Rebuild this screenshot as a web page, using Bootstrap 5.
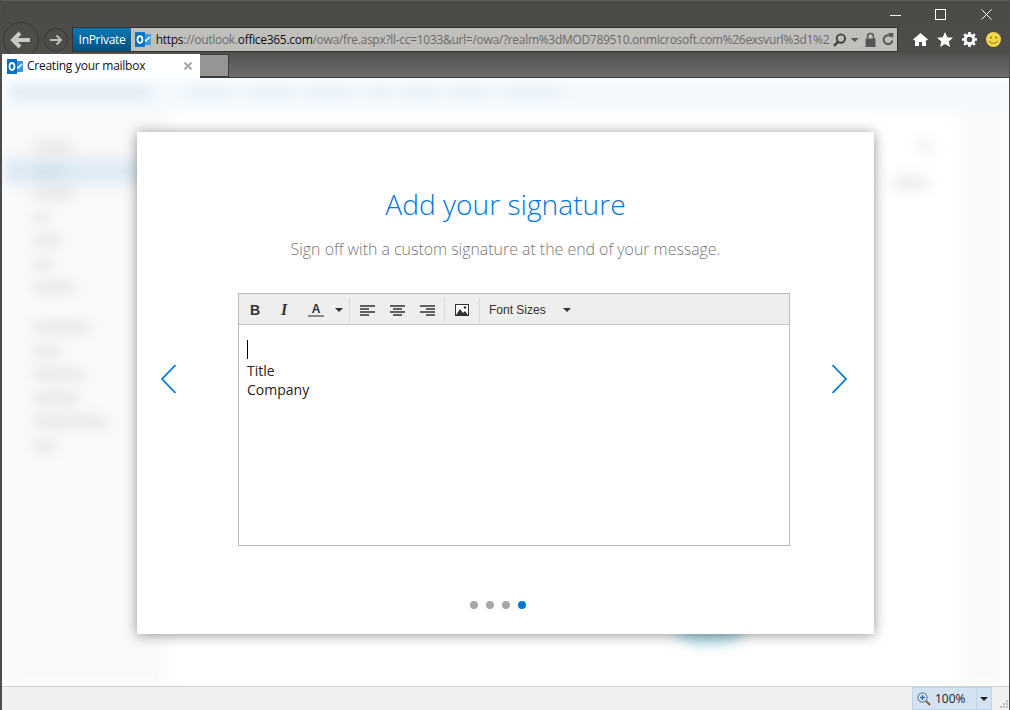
<!DOCTYPE html>
<html lang="en">
<head>
<meta charset="utf-8">
<title>Creating your mailbox</title>
<link rel="stylesheet" href="https://cdn.jsdelivr.net/npm/bootstrap@5.3.0/dist/css/bootstrap.min.css">
<style>
html,body{height:710px;overflow:hidden;margin:0;font-family:"Open Sans","Noto Sans",sans-serif}
.win{width:1010px;height:710px;background:#4a4946;border:solid #4d4c4a;border-width:0 1px 0 2px}
.chrome{height:78px;background:linear-gradient(#4b4a47 0,#4e4d4a 50px,#5a5957 58px,#6f6e6c 77px);border-top:1px solid #5c5b59;border-bottom:1px solid #3a3a38}
.caption{height:24px;padding-top:8px}
.capbtn{width:11px;height:11px;display:block}
.navrow{height:25px;margin-top:2px}
.backbtn{width:36px;height:36px;border:1px solid #383735;border-radius:50%;margin:1px 0 0 1px;flex:none}
.fwdbtn{width:24px;height:24px;border:1px solid #383735;border-radius:50%;margin-left:5px;flex:none}
.addr{width:826px;height:25px;margin-left:4px;background:#c1bfbc;border:1px solid #333230;flex:none}
.priv{width:58px;height:23px;background:linear-gradient(#0a78b5,#05507f);color:#fff;font-size:12px;letter-spacing:-.3px;flex:none}
.urlt{width:672px;margin-left:5px;font-size:12px;color:#6b6a68;white-space:nowrap;flex:none;letter-spacing:-.3px}
.urlt b{font-weight:400;color:#111}
.tools{margin-left:15px;gap:9px}
.tabs{height:24px;margin-top:2px}
.tabcur{width:198px;height:24px;background:#fff;font-size:12px;letter-spacing:-.25px;color:#111;flex:none;padding-left:5px}
.tabnew{width:29px;height:23px;background:#959593;border:1px solid #3a3a38;border-left:0;flex:none}
.stage{height:608px;background:#fff}
.ghost{inset:0;filter:blur(7px)}
.gtop{height:33px;background:#f3f9fd;padding-top:10px;gap:12px}
.gbar{height:8px;background:#e3ecf3;flex:none}
.gside{width:165px;background:#f9f9f9;padding-top:33px}
.gitem{height:7px;margin:0 0 16.5px 32px;background:#d9d9d9}
.gsel{background:#c6d4df}
.gband{height:26px;margin:-10px 0 6.5px;padding:10px 0 0;background:#deeaf4}
.gband .gitem{margin-bottom:0;width:30px}
.gright{width:50px;background:#f9f9f9}
.blob{position:absolute;border-radius:50%}
.stack{padding-top:54px}
.dlg{width:737px;height:502px;background:#fff;box-shadow:0 1px 12px rgba(0,0,0,.42);margin-left:135px}
.dtitle{font-size:28.2px;font-weight:300;color:#0078d7;line-height:38px;margin:53px 0 0}
.dsub{font-size:15.9px;font-weight:300;color:#767676;line-height:22px;margin:15px 0 0}
.body3{margin-top:33px}
.arrow{width:15px;height:30px;flex:none;margin-top:71px}
.ed{width:552px;height:253px;border:1px solid #b9b9b9;margin:0 42px 0 62px;flex:none}
.edbar{height:31px;background:#eee;border-bottom:1px solid #c4c4c4;font-family:"Liberation Sans",sans-serif;color:#333;padding-top:2px}
.tb{display:flex;align-items:center;justify-content:center;height:100%;flex:none}
.sep{width:1px;height:24px;background:#d8d8d8;flex:none}
.edtxt{padding:15px 8px 0;font-size:14px;line-height:19px;color:#222}
.caret1{width:1px;height:19px;background:#000;margin-bottom:2px}
.dots{gap:8px;margin:55px 16px 0 0}
.dotx{width:8px;height:8px;border-radius:50%;background:#a6a6a6}
.doton{background:#0078d7}
.status{height:24px;background:#f0f0f0;border-top:1px solid #d2d2d2;font-size:12px;color:#222}
.zoombox{width:64px;height:23px;margin-left:910px;background:#d3e3f1;border:solid #bcd5ea;border-width:1px 0 1px 1px;flex:none}
.zoomdd{width:16px;height:23px;background:#d3e3f1;border:1px solid #bcd5ea;flex:none}
.grip{margin:auto 0 1px 7px;flex:none}
</style>
</head>
<body>
<div class="win d-flex flex-column">
  <header class="chrome">
    <div class="caption d-flex justify-content-end">
      <svg class="capbtn" style="margin-right:34px" viewBox="0 0 11 11"><path d="M0 6.500h11" stroke="#fff"/></svg>
      <svg class="capbtn" style="margin-right:35px" viewBox="0 0 11 11"><rect x=".5" y=".5" width="10" height="10" fill="none" stroke="#fff"/></svg>
      <svg class="capbtn" style="margin-right:17px" viewBox="0 0 11 11"><path d="M.5.5l10 10M10.500.5l-10 10" stroke="#fff" fill="none"/></svg>
    </div>
    <div class="navrow d-flex align-items-center">
      <div class="backbtn d-flex align-items-center justify-content-center">
        <svg width="22" height="18" viewBox="0 0 22 18"><path d="M20 9H4M10 2L3 9l7 7" fill="none" stroke="#c8c8c6" stroke-width="4"/></svg>
      </div>
      <div class="fwdbtn d-flex align-items-center justify-content-center">
        <svg width="14" height="12" viewBox="0 0 14 12"><path d="M1 6h11M7.500 1.500L12 6l-4.500 4.500" fill="none" stroke="#bdbdbb" stroke-width="2"/></svg>
      </div>
      <div class="addr d-flex align-items-center">
        <div class="priv d-flex align-items-center justify-content-center">InPrivate</div>
        <svg class="ms-1 flex-none" width="16" height="15" viewBox="0 0 16 15"><rect x="6" y="2" width="10" height="11" fill="#3a96dd"/><path d="M8 6l3 3 4-4" fill="none" stroke="#fff" stroke-width="1.500"/><rect y="0" width="10" height="15" fill="#0072c6"/><ellipse cx="5" cy="7.500" rx="2.500" ry="3.500" fill="none" stroke="#fff" stroke-width="1.800"/></svg>
        <div class="urlt"><b>https</b>://outlook.<b>office365.com</b>/owa/fre.aspx?ll-cc=1033&amp;url=/owa/?realm%3dMOD789510.onmicrosoft.com%26exsvurl%3d1%2</div>
        <svg class="ms-1" width="66" height="16" viewBox="0 0 66 16">
          <circle cx="9" cy="6.500" r="4.200" fill="none" stroke="#444" stroke-width="2"/><path d="M6 10l-4 4" stroke="#444" stroke-width="2.500"/>
          <path d="M19 6h8l-4 4z" fill="#555"/>
          <rect x="34" y="6.500" width="10" height="8.500" fill="#555"/><path d="M36 7V4.500a3 3 0 0 1 6 0V7" fill="none" stroke="#555" stroke-width="1.500"/>
          <path d="M60 4.500a4.500 4.500 0 1 0 1.200 4" fill="none" stroke="#555" stroke-width="2"/><path d="M56.500 1l5.500 0v5z" fill="#555"/>
        </svg>
      </div>
      <div class="tools d-flex align-items-center">
        <svg width="15" height="15" viewBox="0 0 15 15"><path d="M7.500 1L0 7.500l1 1 1-.8V14h4v-4h3v4h4V7.700l1 .8 1-1z" fill="#fff"/></svg>
        <svg width="16" height="15" viewBox="0 0 16 15"><path d="M8 0l2.300 5.200 5.700.5-4.300 3.700L13 15 8 12l-5 3 1.300-5.600L0 5.700l5.700-.5z" fill="#fff"/></svg>
        <svg width="15" height="15" viewBox="0 0 15 15"><circle cx="7.500" cy="7.500" r="4.300" fill="none" stroke="#fff" stroke-width="3"/><path d="M7.500 0v15M0 7.500h15M2.200 2.200l10.600 10.600M12.800 2.200L2.200 12.800" stroke="#fff" stroke-width="2.600" stroke-dasharray="3 9"/></svg>
        <svg width="15" height="15" viewBox="0 0 15 15"><circle cx="7.500" cy="7.500" r="7.500" fill="#f2d74b"/><circle cx="5" cy="5.500" r="1" fill="#8a7416"/><circle cx="10" cy="5.500" r="1" fill="#8a7416"/><path d="M3.500 9c1 3 7 3 8 0" fill="none" stroke="#8a7416"/></svg>
      </div>
    </div>
    <div class="tabs d-flex">
      <div class="tabcur d-flex align-items-center">
        <svg width="16" height="15" viewBox="0 0 16 15"><rect x="6" y="2" width="10" height="11" fill="#3a96dd"/><path d="M8 6l3 3 4-4" fill="none" stroke="#fff" stroke-width="1.500"/><rect y="0" width="10" height="15" fill="#0072c6"/><ellipse cx="5" cy="7.500" rx="2.500" ry="3.500" fill="none" stroke="#fff" stroke-width="1.800"/></svg>
        <span class="ms-1">Creating your mailbox</span>
        <svg class="ms-auto me-2" width="8" height="8" viewBox="0 0 8 8"><path d="M.5.5l7 7M7.500.5l-7 7" stroke="#a8a8a8" stroke-width="2"/></svg>
      </div>
      <div class="tabnew"></div>
    </div>
  </header>

  <main class="stage position-relative overflow-hidden">
    <div class="ghost position-absolute d-flex flex-column">
      <div class="gtop d-flex">
        <span class="gbar" style="width:140px;margin:0 26px 0 8px;background:#d6e3ee"></span>
        <span class="gbar" style="width:45px"></span>
        <span class="gbar" style="width:48px"></span>
        <span class="gbar" style="width:48px"></span>
        <span class="gbar" style="width:26px"></span>
        <span class="gbar" style="width:36px"></span>
        <span class="gbar" style="width:38px"></span>
        <span class="gbar" style="width:60px"></span>
      </div>
      <div class="d-flex flex-grow-1">
        <div class="gside">
          <div class="gitem" style="width:38px"></div>
          <div class="gband"><div class="gitem gsel"></div></div>
          <div class="gitem" style="width:40px"></div>
          <div class="gitem" style="width:14px"></div>
          <div class="gitem" style="width:26px"></div>
          <div class="gitem" style="width:18px"></div>
          <div class="gitem" style="width:40px;margin-bottom:33px"></div>
          <div class="gitem" style="width:55px"></div>
          <div class="gitem" style="width:26px"></div>
          <div class="gitem" style="width:50px"></div>
          <div class="gitem" style="width:44px"></div>
          <div class="gitem" style="width:72px"></div>
          <div class="gitem" style="width:22px"></div>
        </div>
        <div class="flex-grow-1"></div>
        <div class="gright"></div>
      </div>
      <div class="blob" style="left:673px;top:538px;width:70px;height:28px;background:#a9d8e4"></div>
      <div class="blob" style="left:888px;top:98px;width:40px;height:14px;background:#e6e9eb"></div>
      <div class="blob" style="left:916px;top:60px;width:16px;height:16px;background:#f0f0f0"></div>
    </div>

    <div class="stack position-relative">
      <section class="dlg d-flex flex-column text-center">
        <h1 class="dtitle">Add your signature</h1>
        <p class="dsub">Sign off with a custom signature at the end of your message.</p>
        <div class="body3 d-flex align-items-start ps-4">
          <svg class="arrow" viewBox="0 0 15 30"><path d="M14.500 1L1 15l13.500 14" fill="none" stroke="#0078d7" stroke-width="1.800"/></svg>
          <div class="ed d-flex flex-column text-start">
            <div class="edbar d-flex align-items-center">
              <div class="tb" style="width:32px;font-weight:700;font-size:14px">B</div>
              <div class="tb" style="width:26px;font-family:'Liberation Serif',serif;font-style:italic;font-weight:700;font-size:16px">I</div>
              <div class="tb flex-column" style="width:38px;font-size:12px;font-weight:700;line-height:12px">A<svg class="d-block" width="16" height="2"><rect width="16" height="2" fill="#888"/></svg></div>
              <svg width="8" height="4" viewBox="0 0 8 4"><path d="M0 0h8L4 4z" fill="#333"/></svg>
              <div class="sep" style="margin-left:6px"></div>
              <svg style="margin-left:10px" width="15" height="11" viewBox="0 0 15 11"><path d="M0 1h15M0 4h9M0 7h15M0 10h9" stroke="#333" stroke-width="1.500"/></svg>
              <svg style="margin-left:15px" width="15" height="11" viewBox="0 0 15 11"><path d="M0 1h15M3 4h9M0 7h15M3 10h9" stroke="#333" stroke-width="1.500"/></svg>
              <svg style="margin-left:15px" width="15" height="11" viewBox="0 0 15 11"><path d="M0 1h15M6 4h9M0 7h15M6 10h9" stroke="#333" stroke-width="1.500"/></svg>
              <div class="sep" style="margin-left:9px"></div>
              <svg style="margin-left:10px" width="14" height="12" viewBox="0 0 14 12"><rect x=".5" y=".5" width="13" height="11" fill="#fff" stroke="#333"/><path d="M1 11l4-6 3 4 2-2 3 4z" fill="#333"/><circle cx="10" cy="3.500" r="1.300" fill="#333"/></svg>
              <div class="sep" style="margin-left:10px"></div>
              <span style="font-size:12px;margin-left:9px;width:74px">Font Sizes</span>
              <svg width="8" height="4" viewBox="0 0 8 4"><path d="M0 0h8L4 4z" fill="#333"/></svg>
            </div>
            <div class="edtxt">
              <div class="caret1"></div>
              <div>Title</div>
              <div>Company</div>
            </div>
          </div>
          <svg class="arrow" viewBox="0 0 15 30"><path d="M.5 1L14 15 .5 29" fill="none" stroke="#0078d7" stroke-width="1.800"/></svg>
        </div>
        <div class="dots d-flex justify-content-center">
          <span class="dotx"></span><span class="dotx"></span><span class="dotx"></span><span class="dotx doton"></span>
        </div>
      </section>
    </div>
  </main>

  <footer class="status d-flex">
    <div class="zoombox d-flex align-items-center">
      <svg class="ms-1" width="14" height="14" viewBox="0 0 14 14"><circle cx="5.500" cy="5.500" r="4.500" fill="#e8f1f8" stroke="#7d93a6" stroke-width="1.500"/><path d="M3 5.500h5M5.500 3v5" stroke="#1b6fb5" stroke-width="1.500"/><path d="M9 9l4 4" stroke="#8a5a2a" stroke-width="2"/></svg>
      <span class="ms-1">100%</span>
    </div>
    <div class="zoomdd d-flex align-items-center justify-content-center">
      <svg width="8" height="4" viewBox="0 0 8 4"><path d="M0 0h8L4 4z" fill="#222"/></svg>
    </div>
    <svg class="grip" width="10" height="10" viewBox="0 0 10 10"><path d="M7 1h2v2H7zM4 4h2v2H4zM7 4h2v2H7zM1 7h2v2H1zM4 7h2v2H4zM7 7h2v2H7z" fill="#bdbdbd"/></svg>
  </footer>
</div>
<script src="https://cdn.jsdelivr.net/npm/bootstrap@5.3.0/dist/js/bootstrap.bundle.min.js"></script>
</body>
</html>
